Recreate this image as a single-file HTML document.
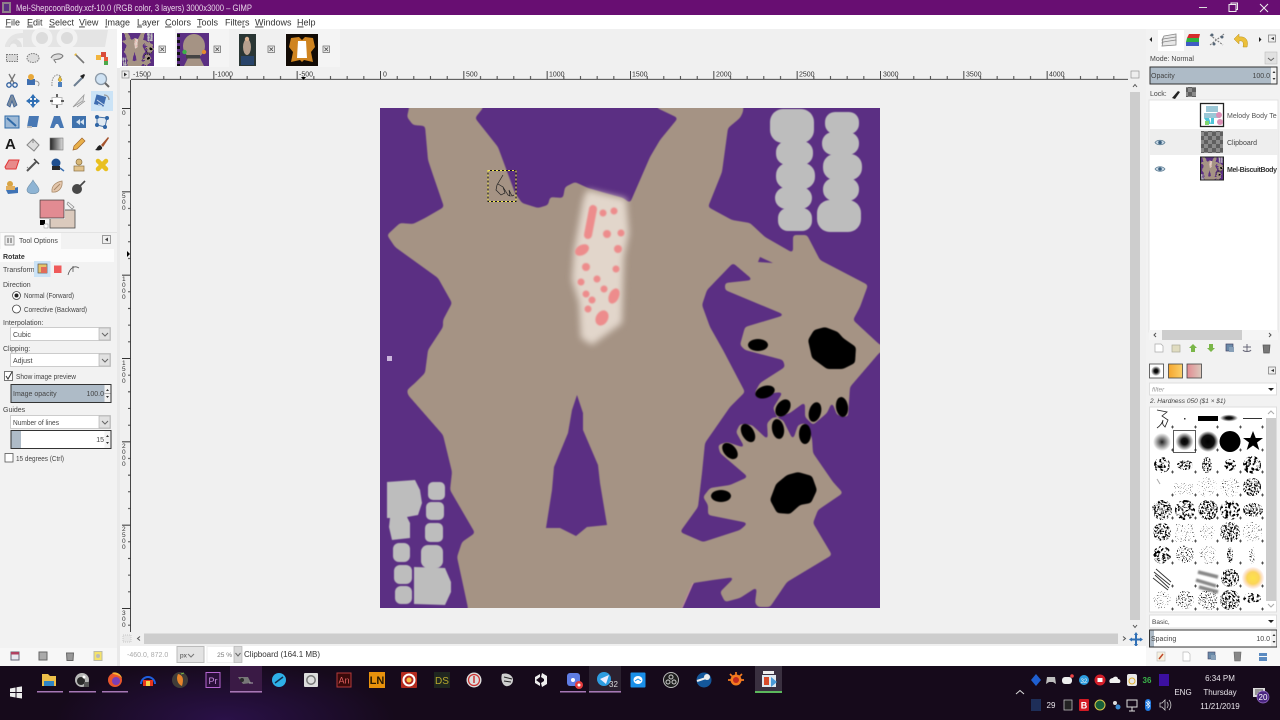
<!DOCTYPE html>
<html><head><meta charset="utf-8"><title>GIMP</title>
<style>
html,body{margin:0;padding:0;background:#f0f0f0;width:1280px;height:720px;overflow:hidden}
svg{display:block}
text{font-family:"Liberation Sans",sans-serif;font-size:7.5px;fill:#444}
.m{font-size:9px;fill:#333}
.o{font-size:7px;fill:#444}
.r{font-size:7px;fill:#333}
.w{fill:#e8e4ea;font-size:8px}
</style></head><body>
<svg width="1280" height="720" viewBox="0 0 1280 720" xmlns="http://www.w3.org/2000/svg">
<defs>
<clipPath id="cv"><rect x="380" y="108" width="500" height="500"/></clipPath>
<filter id="round" x="-5%" y="-5%" width="110%" height="110%" color-interpolation-filters="sRGB"><feGaussianBlur stdDeviation="1.500"/><feComponentTransfer><feFuncA type="linear" slope="9" intercept="-4"/></feComponentTransfer><feGaussianBlur stdDeviation=".45"/></filter>
<filter id="soft" x="-5%" y="-5%" width="110%" height="110%" color-interpolation-filters="sRGB"><feGaussianBlur stdDeviation="0.55"/></filter>
<filter id="blur3" x="-30%" y="-30%" width="160%" height="160%" color-interpolation-filters="sRGB"><feGaussianBlur stdDeviation="3.400"/></filter>
<filter id="blur1" x="-30%" y="-30%" width="160%" height="160%" color-interpolation-filters="sRGB"><feGaussianBlur stdDeviation="0.8"/></filter>
<filter id="n1" x="0" y="0" width="100%" height="100%"><feTurbulence type="fractalNoise" baseFrequency=".55" numOctaves="2" seed="3"/><feColorMatrix values="0 0 0 0 0 0 0 0 0 0 0 0 0 0 0 7 0 0 0 -3.300"/><feComposite in2="SourceGraphic" operator="in"/></filter>
<filter id="n2" x="0" y="0" width="100%" height="100%"><feTurbulence type="fractalNoise" baseFrequency=".8" numOctaves="1" seed="8"/><feColorMatrix values="0 0 0 0 0 0 0 0 0 0 0 0 0 0 0 9 0 0 0 -5"/><feComposite in2="SourceGraphic" operator="in"/></filter>
<filter id="n3" x="0" y="0" width="100%" height="100%"><feTurbulence type="fractalNoise" baseFrequency=".35" numOctaves="3" seed="14"/><feColorMatrix values="0 0 0 0 0 0 0 0 0 0 0 0 0 0 0 8 0 0 0 -3.900"/><feComposite in2="SourceGraphic" operator="in"/></filter>
<filter id="n4" x="0" y="0" width="100%" height="100%"><feTurbulence type="fractalNoise" baseFrequency=".9" numOctaves="1" seed="21"/><feColorMatrix values="0 0 0 0 0 0 0 0 0 0 0 0 0 0 0 12 0 0 0 -7.600"/><feComposite in2="SourceGraphic" operator="in"/></filter>
<radialGradient id="sb1"><stop offset="0" stop-color="#222"/><stop offset="1" stop-color="#222" stop-opacity="0"/></radialGradient>
<radialGradient id="sb2"><stop offset="0" stop-color="#000"/><stop offset=".35" stop-color="#111"/><stop offset="1" stop-color="#111" stop-opacity="0"/></radialGradient>
<radialGradient id="sb3"><stop offset="0" stop-color="#000"/><stop offset=".6" stop-color="#111"/><stop offset="1" stop-color="#111" stop-opacity="0"/></radialGradient>
<radialGradient id="sun"><stop offset="0" stop-color="#fde24a"/><stop offset=".55" stop-color="#fbd55a"/><stop offset="1" stop-color="#f9b8a0" stop-opacity=".1"/></radialGradient>
<radialGradient id="glow" gradientUnits="userSpaceOnUse" cx="225" cy="720" r="170" gradientTransform="translate(0 468) scale(1 .35)"><stop offset="0" stop-color="#2a1148"/><stop offset="1" stop-color="#2a1148" stop-opacity="0"/></radialGradient>
<linearGradient id="grad" x1="0" x2="1"><stop offset="0" stop-color="#222"/><stop offset="1" stop-color="#ddd"/></linearGradient>
<linearGradient id="ograd" x1="0" x2="1"><stop offset="0" stop-color="#f4a62f"/><stop offset="1" stop-color="#fbd06a"/></linearGradient>
<linearGradient id="pgrad" x1="0" x2="1"><stop offset="0" stop-color="#e28b92"/><stop offset="1" stop-color="#dbcabd"/></linearGradient>
<pattern id="chk" width="8" height="8" patternUnits="userSpaceOnUse"><rect width="8" height="8" fill="#8b8b8b"/><rect width="4" height="4" fill="#5f5f5f"/><rect x="4" y="4" width="4" height="4" fill="#5f5f5f"/></pattern>
<pattern id="rx" x="380" y="67" width="83.333" height="12" patternUnits="userSpaceOnUse"><path d="M.5 4V12M17.2 9V12M33.8 9V12M50.5 9V12M67.2 9V12" stroke="#333" stroke-width=".9" fill="none"/></pattern>
<pattern id="ry" x="119" y="108" width="12" height="83.333" patternUnits="userSpaceOnUse"><path d="M3 .5H12M9 17.2H12M9 33.8H12M9 50.5H12M9 67.2H12" stroke="#333" stroke-width=".9" fill="none"/></pattern>

<g id="art">
<rect x="380" y="108" width="500" height="500" fill="#5b2f83"/>
<g clip-path="url(#cv)">
<g filter="url(#round)">
<path fill="#a59384" d="M409 100L483 100 483 108 475 118 498 147 515 193 522 203 538 208 548 205 550 197 563 198 565 187 575 182 588 188 605 193 623 198 630 203 650 157 660 140 678 118 657 108 655 100 744 100 743 112 740 118 728 128 722 172 708 207 732 220 750 223 765 237 793 253 793 235 807 235 820 260 868 285 860 307 853 320 880 345 892 345 892 352 880 352 850 387 848 417 837 415 832 402 827 413 813 425 805 417 805 402 790 413 777 417 773 408 783 392 773 393 758 398 755 392 760 383 785 367 783 360 745 350 740 345 745 327 785 315 725 290 725 283 753 280 733 263 707 290 702 305 710 327 723 350 745 392 730 407 705 443 702 473 698 507 680 532 703 542 740 530 748 523 708 515 708 505 703 497 710 488 730 485 748 477 720 453 718 445 727 442 745 448 736 432 740 424 752 425 768 440 767 423 773 417 783 420 793 440 798 425 805 423 812 438 813 453 833 482 843 493 818 510 813 523 832 555 787 582 770 607 758 607 755 603 757 587 740 598 725 602 720 592 735 577 713 580 700 582 693 583 682 608 680 618 466 618 468 608 462 580 457 557 462 542 475 533 450 490 452 472 443 435 408 395 407 390 415 383 425 373 428 350 443 327 443 320 452 303 438 278 395 247 387 235 400 223 413 224 425 218 444 207 433 175 428 160 425 126 413 125 407 117 409 108z"/>
</g>
<g filter="url(#soft)">
<path fill="#5b2f83" d="M577 395L572 410 568 433 554 467 552 490 546 528 560 528 576 536 587 527 607 525 600 483 598 465 583 430 583 413z"/>
<path fill="#5b2f83" d="M760 257L773 263 758 262z"/>
<path fill="none" stroke="#d9a3a8" stroke-width="1" opacity=".8" d="M682 608L693 583"/>
</g>
</g>
<path fill="#e2d6cb" filter="url(#blur3)" d="M587 190L626 199 629 233 624 257 622 323 592 345 581 338 579 303 572 280 574 250 583 200z"/>
<g fill="#ed8c8c" filter="url(#blur1)">
<path d="M593 209L588 235" stroke="#ed8c8c" stroke-width="8" stroke-linecap="round"/>
<ellipse cx="582" cy="250" rx="7.500" ry="5" transform="rotate(-30 582 250)"/>
<circle cx="586" cy="267" r="4"/><circle cx="603" cy="213" r="3.500"/><circle cx="614" cy="211" r="3.500"/><circle cx="607" cy="234" r="4"/><circle cx="621" cy="233" r="3.500"/><circle cx="618" cy="249" r="4"/><circle cx="616" cy="269" r="3.500"/><circle cx="581" cy="282" r="3.500"/><circle cx="597" cy="279" r="3.500"/><circle cx="604" cy="289" r="3.500"/><circle cx="586" cy="294" r="3.500"/><circle cx="592" cy="300" r="3.500"/><circle cx="588" cy="309" r="3.500"/>
<ellipse cx="614" cy="296" rx="5" ry="8" transform="rotate(25 614 296)"/>
<ellipse cx="602" cy="318" rx="6" ry="8" transform="rotate(30 602 318)"/>
</g>
<g fill="#000" filter="url(#round)">
<path d="M825 327L838 332 843 338 856 347 855 363 843 369 827 369 812 358 808 340 814 330z"/>
<path d="M798 472L812 476 817 490 811 503 800 505 790 514 777 513 770 500 776 484 787 475z"/>
</g>
<g fill="#000" filter="url(#soft)">
<ellipse cx="758" cy="345" rx="10" ry="6"/>
<ellipse cx="765" cy="392" rx="10" ry="6" transform="rotate(-18 765 392)"/>
<ellipse cx="783" cy="408" rx="6.500" ry="9.500" transform="rotate(35 783 408)"/>
<ellipse cx="815" cy="412" rx="6" ry="10" transform="rotate(15 815 412)"/>
<ellipse cx="842" cy="407" rx="6" ry="10" transform="rotate(-8 842 407)"/>
<ellipse cx="748" cy="433" rx="6" ry="10" transform="rotate(-30 748 433)"/>
<ellipse cx="730" cy="451" rx="6" ry="9.500" transform="rotate(-42 730 451)"/>
<ellipse cx="778" cy="429" rx="6" ry="10" transform="rotate(-10 778 429)"/>
<ellipse cx="805" cy="434" rx="6" ry="10"/>
<ellipse cx="721" cy="496" rx="10" ry="6"/>
</g>
<g fill="#bdbdbd" filter="url(#soft)">
<rect x="770" y="109" width="44" height="34" rx="13"/><rect x="776" y="141" width="37" height="24" rx="11"/><rect x="776" y="163" width="39" height="26" rx="12"/><rect x="775" y="187" width="37" height="22" rx="11"/><rect x="778" y="208" width="34" height="23" rx="10"/>
<rect x="825" y="112" width="34" height="22" rx="10"/><rect x="822" y="132" width="37" height="23" rx="11"/><rect x="823" y="154" width="39" height="26" rx="12"/><rect x="823" y="178" width="36" height="23" rx="11"/><rect x="817" y="200" width="44" height="32" rx="13"/>
<path d="M387 482L415 480 420 490 422 503 418 515 407 517 410 523 410 538 392 540 389 527 390 518 387 518z"/>
<rect x="428" y="482" width="17" height="18" rx="5"/><rect x="426" y="502" width="18" height="18" rx="5"/><rect x="425" y="523" width="18" height="19" rx="5"/><rect x="421" y="545" width="22" height="23" rx="7"/>
<path d="M414 567L445 568 451 582 451 592 445 605 414 604z"/>
<rect x="393" y="543" width="17" height="19" rx="6"/><rect x="394" y="565" width="18" height="19" rx="6"/><rect x="395" y="586" width="17" height="18" rx="6"/>
</g>
<rect x="387" y="356" width="5" height="5" fill="#cbb6dc"/>
<path d="M503 175L497 185 496 190 501 195 505 193 503 187 498 184M503 187L508 195 510 196 509 190 512 196 514 195" fill="none" stroke="#222" stroke-width=".7"/>
</g>
</defs>

<!-- title bar -->
<rect width="1280" height="15" fill="#680e72"/>
<rect x="2" y="2" width="9" height="11" fill="#8f7f8a"/><rect x="4" y="4" width="5" height="7" fill="#5b2f83"/>
<text x="16" y="11" style="font-size:9px;fill:#e9d9ea" textLength="236" lengthAdjust="spacingAndGlyphs">Mel-ShepcoonBody.xcf-10.0 (RGB color, 3 layers) 3000x3000 – GIMP</text>
<path d="M1199 7.500H1207" stroke="#ddd" stroke-width="1"/>
<path d="M1229 4.500h7v7h-7zM1231 4.500v-1.500h6.500v6.500h-1.500" fill="none" stroke="#eee" stroke-width="1"/>
<path d="M1260 4L1268 12M1268 4L1260 12" stroke="#eee" stroke-width="1"/>

<!-- menu -->
<rect y="15" width="1280" height="14" fill="#fff"/>
<g class="m">
<text class="m" x="5.500" y="25.500"><tspan text-decoration="underline">F</tspan>ile</text>
<text class="m" x="27" y="25.500"><tspan text-decoration="underline">E</tspan>dit</text>
<text class="m" x="49" y="25.500"><tspan text-decoration="underline">S</tspan>elect</text>
<text class="m" x="79" y="25.500"><tspan text-decoration="underline">V</tspan>iew</text>
<text class="m" x="105" y="25.500"><tspan text-decoration="underline">I</tspan>mage</text>
<text class="m" x="137" y="25.500"><tspan text-decoration="underline">L</tspan>ayer</text>
<text class="m" x="165" y="25.500"><tspan text-decoration="underline">C</tspan>olors</text>
<text class="m" x="197" y="25.500"><tspan text-decoration="underline">T</tspan>ools</text>
<text class="m" x="225" y="25.500">Filte<tspan text-decoration="underline">r</tspan>s</text>
<text class="m" x="255" y="25.500"><tspan text-decoration="underline">W</tspan>indows</text>
<text class="m" x="297" y="25.500"><tspan text-decoration="underline">H</tspan>elp</text>
</g>

<!-- left dock -->
<rect y="29" width="117" height="637" fill="#f2f2f2"/>
<rect x="117" y="29" width="3" height="637" fill="#e9e9e9"/>
<path d="M23 30H108L105 47H23z" fill="#e4e4e4"/>
<path d="M5 47A8.500 8.500 0 0 1 22 47H17A3.500 3.500 0 0 0 10 47z" fill="#e0e0e0"/>
<path d="M5 47C7 38 12 33 23 33V38C15 38 10 41 9 47z" fill="#e4e4e4"/>
<circle cx="42" cy="38" r="10.500" fill="#f2f2f2"/><circle cx="42" cy="38" r="6" fill="#dcdcdc"/>
<circle cx="67" cy="38" r="10.500" fill="#f2f2f2"/><circle cx="67" cy="38" r="6" fill="#dcdcdc"/>
<rect x="91" y="91" width="22" height="20" fill="#cbe3f6"/>

<!-- tools r1 -->
<g transform="translate(12,58)"><rect x="-5.500" y="-3.500" width="11" height="7" fill="#d7d7d7" stroke="#777" stroke-dasharray="1.500 1"/></g>
<g transform="translate(33,58)"><ellipse rx="6" ry="4.500" fill="#ddd" stroke="#777" stroke-dasharray="1.500 1"/></g>
<g transform="translate(57,58)"><path d="M-6 0C-4 -5 4 -5 6 -2 4 2 -1 1 -3 2L-1 5" fill="#ddd" stroke="#777"/></g>
<g transform="translate(79,58)"><path d="M-3 -3L5 5" stroke="#777" stroke-width="1.600"/><path d="M-4 -4l1 1" stroke="#e8b83a" stroke-width="2.500"/></g>
<g transform="translate(102,58)"><rect x="-6" y="-3" width="5" height="5" fill="#f2b53e"/><rect x="-1" y="-6" width="5" height="5" fill="#d94b3a"/><rect x="2" y="-1" width="4" height="4" fill="#e85a3a"/><rect x="2" y="3" width="4" height="4" fill="#4ca84a"/></g>
<!-- r2 -->
<g transform="translate(12,80)"><path d="M-3 -6L2 3M3 -6L-2 3" stroke="#777" stroke-width="1.300"/><circle cx="-3" cy="5" r="2.200" fill="none" stroke="#2f5f9f" stroke-width="1.300"/><circle cx="3" cy="5" r="2.200" fill="none" stroke="#2f5f9f" stroke-width="1.300"/></g>
<g transform="translate(33,80)"><rect x="-6" y="-1" width="8" height="6" fill="#3f6fb0"/><circle cx="-2" cy="-3" r="3" fill="#e8a83a"/><path d="M2 1C6 1 7 4 5 6" fill="none" stroke="#999"/></g>
<g transform="translate(57,80)"><path d="M-5 6C-6 -6 2 -7 4 -3" fill="none" stroke="#888" stroke-dasharray="1.500 1"/><path d="M3 -4L5 0 3 2 1 0z" fill="#edc13c" stroke="#8a7a30" stroke-width=".5"/><rect x="1" y="2" width="4" height="5" fill="#4d7fbd"/></g>
<g transform="translate(79,80)"><path d="M-5 6L3 -2" stroke="#6d7f92" stroke-width="2"/><path d="M1 -4L5 -6 6 -5 4 -1z" fill="#222"/></g>
<g transform="translate(102,80)"><circle cx="-1" cy="-1" r="5.500" fill="#cfe2f3" stroke="#8c9aa8" stroke-width="1.300"/><path d="M3 3L7 7" stroke="#666" stroke-width="2"/></g>
<!-- r3 -->
<g transform="translate(12,101)"><path d="M-1 -6L-5 4-2 6 0 0 2 6 5 4 1 -6z" fill="#7a8ca0" stroke="#3a5f95" stroke-width=".8"/></g>
<g transform="translate(33,101)"><path d="M0-7L3-3H1V-1H3V-3L7 0 3 3V1H1V3H3L0 7-3 3H-1V1H-3V3L-7 0-3-3V-1H-1V-3H-3z" fill="#2f6fb5"/></g>
<g transform="translate(57,101)"><rect x="-5" y="-3.500" width="10" height="7" fill="#fff" stroke="#bbb"/><path d="M0-7V-4M0 7V4M-7 0H-4M7 0H4" stroke="#333" stroke-width="1.500"/></g>
<g transform="translate(79,101)"><path d="M-6 6L5 -6 4 0 -1 3zM-2 6L6 0" fill="#ddd" stroke="#999" stroke-width=".8"/></g>
<g transform="translate(102,101)"><rect x="-7" y="-5" width="10" height="10" fill="#3f6db0" transform="rotate(15)"/><path d="M-5 -1L2 4M-4 3L0 5" stroke="#cde" stroke-width="1"/><path d="M2 -6C5 -6 7 -4 7 -1" fill="none" stroke="#999" stroke-width="1.200"/></g>
<!-- r4 -->
<g transform="translate(12,122)"><rect x="-7" y="-6" width="14" height="12" fill="#9db9d6" stroke="#2f6aa8"/><path d="M-5 -4L4 4" stroke="#2f6aa8" stroke-width="2"/></g>
<g transform="translate(33,122)"><path d="M-4 -6H6L4 5H-6z" fill="#4878b4"/><path d="M-6 5H-1" stroke="#bbb" stroke-width="2"/></g>
<g transform="translate(57,122)"><path d="M-3 -6H3L7 6H3L1 2H-1L-3 6H-7z" fill="#4878b4"/></g>
<g transform="translate(79,122)"><path d="M-7 -6H7V6H-7z" fill="#3f72ad"/><path d="M-3 0L1 -3V3zM1 0L5 -3V3z" fill="#d5e3f0"/></g>
<g transform="translate(102,122)"><path d="M-5 -5L5 -4 3 5 -5 3z" fill="#dfe9f2" stroke="#4a75a8"/><g fill="#2f65a5"><circle cx="-5" cy="-5" r="2"/><circle cx="5" cy="-4" r="2"/><circle cx="3" cy="5" r="2"/><circle cx="-5" cy="3" r="2"/></g></g>
<!-- r5 -->
<text x="5" y="149" style="font-size:15px;font-weight:bold;fill:#1b1b1b">A</text>
<g transform="translate(33,144)"><path d="M-6 1L0 -5 6 1 1 7z" fill="#ddd" stroke="#888"/><path d="M0 -5V-1" stroke="#888"/></g>
<rect x="50" y="138" width="13" height="12" fill="url(#grad)" stroke="#777" stroke-width=".6"/>
<g transform="translate(79,144)"><path d="M-6 6L-5 2 3 -6 6 -3 -2 5z" fill="#e9b04a" stroke="#a0652a" stroke-width=".7"/></g>
<g transform="translate(102,144)"><path d="M6 -7L-1 1 1 3 7 -6z" fill="#a4532c"/><path d="M-2 1C-5 2 -5 5 -7 6 -3 7 1 6 0 3z" fill="#222"/></g>
<!-- r6 -->
<g transform="translate(12,165)"><path d="M-7 2L-3 -5H7L4 4H-6z" fill="#e88a8a" stroke="#e03535" stroke-width="1"/></g>
<g transform="translate(33,165)"><path d="M-6 6L3 -3" stroke="#555" stroke-width="2"/><path d="M1 -6L6 -1" stroke="#444" stroke-width="1.500"/><path d="M-5 2l-1 1" stroke="#888"/></g>
<g transform="translate(57,165)"><circle cx="-1" cy="-2" r="4.500" fill="#1f4f8f"/><rect x="-5" y="1" width="8" height="4" fill="#2a2a2a"/><path d="M3 3L7 6" stroke="#3a6fb0" stroke-width="1.500"/></g>
<g transform="translate(79,165)"><circle cy="-3" r="3" fill="#d8b878" stroke="#8a7040" stroke-width=".7"/><rect x="-5" y="1" width="10" height="5" fill="#e2c38c" stroke="#8a7040" stroke-width=".7"/></g>
<g transform="translate(102,165)"><path d="M-4 -4L4 4M4 -4L-4 4" stroke="#e9c01f" stroke-width="4.500" stroke-linecap="round"/></g>
<!-- r7 -->
<g transform="translate(12,187)"><path d="M-6 3L6 0 6 6 -4 7z" fill="#3f73b5"/><circle cx="-2" cy="-3" r="3" fill="#d8a444"/><rect x="-6" y="-1" width="9" height="4" fill="#e2ae5c"/></g>
<g transform="translate(33,187)"><path d="M0 -7C2 -3 6 0 6 3 6 8 -6 8 -6 3 -6 0 -2 -3 0 -7z" fill="#8eb4d4" stroke="#6f8fa8" stroke-width=".6"/></g>
<g transform="translate(57,187)"><path d="M-5 5C-6 -2 0 -5 5 -6 6 0 2 6 -5 5z" fill="#e4c7ad" stroke="#a98a68" stroke-width=".8"/><path d="M-3 3L3 -3" stroke="#a98a68"/></g>
<g transform="translate(79,187)"><circle cx="-2" cy="2" r="5" fill="#484848"/><path d="M1 -1L6 -6" stroke="#484848" stroke-width="1.700"/></g>

<!-- colours -->
<rect x="50" y="210" width="25" height="18" fill="#dbcabd" stroke="#4a4a4a" stroke-width=".8"/>
<rect x="39" y="199" width="26" height="20" fill="#fff"/>
<rect x="40" y="200" width="24" height="18" fill="#e28b92" stroke="#4a4040" stroke-width=".8"/>
<rect x="40" y="220" width="5" height="5" fill="#000"/><rect x="44" y="224" width="4" height="4" fill="#fff" stroke="#888" stroke-width=".5"/>
<path d="M68 202L74 207 72 209 67 204z" fill="#eee" stroke="#888" stroke-width=".7"/>

<!-- tool options -->
<rect x="0" y="232" width="117" height="1" fill="#e3e3e3"/>
<rect x="1" y="233" width="60" height="16" fill="#fbfbfb"/>
<rect x="5" y="236" width="9" height="9" fill="#eee" stroke="#888" stroke-width=".7"/>
<path d="M8 238v5M11 238v5" stroke="#555"/>
<text class="o" x="19" y="243">Tool Options</text>
<rect x="102.500" y="235.500" width="8" height="8" fill="#eee" stroke="#777" stroke-width=".7"/><path d="M108 237.500L105 239.500 108 241.500z" fill="#444"/>
<rect x="0" y="249" width="114" height="13" fill="#fbfbfb"/>
<text class="o" x="3" y="259" style="font-weight:bold;fill:#333">Rotate</text>
<text class="o" x="3" y="272">Transform:</text>
<rect x="34" y="261" width="16.500" height="16" fill="#cbe3f6"/>
<rect x="38" y="264" width="9" height="9" fill="#e5c46b" stroke="#555" stroke-width=".7"/><rect x="41" y="267" width="6" height="6" fill="#e06c5a"/>
<rect x="54" y="265.500" width="7.500" height="7.500" fill="#ef5a5a"/>
<path d="M68 275C70 268 74 265 79 268M73 266v6" fill="none" stroke="#555" stroke-width=".8"/>
<text class="o" x="3" y="287">Direction</text>
<circle cx="16.500" cy="295.500" r="4" fill="#fff" stroke="#444" stroke-width=".8"/><circle cx="16.500" cy="295.500" r="2" fill="#222"/>
<text class="o" x="24" y="298" textLength="50" lengthAdjust="spacingAndGlyphs">Normal (Forward)</text>
<circle cx="16.500" cy="309" r="4" fill="#fff" stroke="#444" stroke-width=".8"/>
<text class="o" x="24" y="312" textLength="63" lengthAdjust="spacingAndGlyphs">Corrective (Backward)</text>
<text class="o" x="3" y="325">Interpolation:</text>
<rect x="10.500" y="327.500" width="100" height="13" fill="#fff" stroke="#ccc"/><rect x="99" y="328" width="11" height="12" fill="#e1e1e1" stroke="#aaa" stroke-width=".6"/><path d="M102 333l3 3 3-3" fill="none" stroke="#666"/>
<text class="o" x="13" y="337">Cubic</text>
<text class="o" x="3" y="351">Clipping:</text>
<rect x="10.500" y="353.500" width="100" height="13" fill="#fff" stroke="#ccc"/><rect x="99" y="354" width="11" height="12" fill="#e1e1e1" stroke="#aaa" stroke-width=".6"/><path d="M102 359l3 3 3-3" fill="none" stroke="#666"/>
<text class="o" x="13" y="363">Adjust</text>
<rect x="4.500" y="371.500" width="8" height="9" fill="#fff" stroke="#555" stroke-width=".8"/><path d="M6 376l2 3 4-7" fill="none" stroke="#333"/>
<text class="o" x="16" y="379" textLength="60" lengthAdjust="spacingAndGlyphs">Show image preview</text>
<rect x="11" y="384.500" width="100" height="18" fill="#aebbc7" stroke="#333"/><rect x="104.500" y="385" width="6" height="17" fill="#f2f2f2"/><path d="M106 391l1.500-2 1.500 2zM106 396l1.500 2 1.500-2z" fill="#333"/><path d="M104.500 393.500h6" stroke="#777" stroke-width=".5"/>
<text class="o" x="13" y="396">Image opacity</text><text class="o" x="104" y="396" text-anchor="end">100.0</text>
<text class="o" x="3" y="412">Guides</text>
<rect x="10.500" y="415.500" width="100" height="13" fill="#fff" stroke="#ccc"/><rect x="99" y="416" width="11" height="12" fill="#e1e1e1" stroke="#aaa" stroke-width=".6"/><path d="M102 421l3 3 3-3" fill="none" stroke="#666"/>
<text class="o" x="13" y="425" textLength="46" lengthAdjust="spacingAndGlyphs">Number of lines</text>
<rect x="11" y="430.500" width="100" height="18" fill="#fff" stroke="#333"/><rect x="11.500" y="431" width="9.500" height="17" fill="#aebbc7"/><rect x="104.500" y="431" width="6" height="17" fill="#f2f2f2"/><path d="M106 437l1.500-2 1.500 2zM106 442l1.500 2 1.500-2z" fill="#333"/>
<text class="o" x="104" y="442" text-anchor="end">15</text>
<rect x="5" y="453.500" width="8" height="8.500" fill="#fff" stroke="#555" stroke-width=".8"/>
<text class="o" x="16" y="461" textLength="48" lengthAdjust="spacingAndGlyphs">15 degrees  (Ctrl)</text>
<rect x="0" y="648" width="117" height="18" fill="#f7f7f7"/>
<g transform="translate(15,656)"><rect x="-4" y="-4" width="8" height="8" fill="#e8e8ef" stroke="#667"/><rect x="-4" y="-4" width="8" height="2.500" fill="#b04060"/></g>
<g transform="translate(43,656)"><rect x="-4" y="-4" width="8" height="8" fill="#aaa" stroke="#666"/></g>
<g transform="translate(70,656)"><path d="M-3.500 -3H3.500L3 4.500H-3z" fill="#999" stroke="#666"/></g>
<g transform="translate(98,656)"><rect x="-4" y="-4.500" width="8" height="9" fill="#f5e36a" stroke="#bba"/><circle r="2" fill="#bbb"/></g>

<!-- tabs -->
<rect x="120" y="29" width="1026" height="38" fill="#f0f0f0"/>
<rect x="117" y="29" width="58" height="39" fill="#fff"/>
<rect x="175" y="29" width="54" height="38" fill="#f4f4f4"/><rect x="229" y="29" width="56" height="38" fill="#f0f0f0"/><rect x="285" y="29" width="55" height="38" fill="#f4f4f4"/>
<svg x="122" y="33" width="32" height="33" viewBox="380 108 500 500" preserveAspectRatio="none"><use href="#art"/></svg>
<g>
<rect x="177" y="33" width="32" height="33" fill="#5b2f83"/>
<ellipse cx="194" cy="46" rx="11" ry="12" fill="#a59384"/><path d="M188 58L200 58 204 66H184z" fill="#a59384"/>
<path d="M178.500 34v32" stroke="#111" stroke-width="3" stroke-dasharray="3 3"/>
<circle cx="184.500" cy="52" r="2.200" fill="#3bb24a"/><circle cx="204" cy="52" r="2.200" fill="#e58b2f"/><rect x="186" y="55" width="14" height="3.500" fill="#444"/>
</g>
<g>
<rect x="239" y="34" width="17" height="32" fill="#2a3634"/><ellipse cx="247" cy="47" rx="4" ry="8" fill="#b7a08e"/><circle cx="247" cy="39" r="2.200" fill="#d8b090"/><rect x="241" y="56" width="13" height="9" fill="#28446a"/>
</g>
<g>
<rect x="286" y="34" width="32" height="32" fill="#120b05"/><path d="M291 38L299 37 302 40 305 37 313 38 315 47 311 52 313 62 304 60 302 62 300 60 291 62 293 52 289 47z" fill="#cf8420"/><path d="M298 41H306L307 58H297z" fill="#fff"/>
</g>
<g fill="#eaeaea" stroke="#666" stroke-width=".7">
<rect x="159" y="46" width="6.500" height="6.500"/><rect x="214" y="46" width="6.500" height="6.500"/><rect x="268" y="46" width="6.500" height="6.500"/><rect x="323" y="46" width="6.500" height="6.500"/>
</g>
<path d="M160.500 47.500l3.500 3.500m0-3.500l-3.500 3.500M215.500 47.500l3.500 3.500m0-3.500l-3.500 3.500M269.500 47.500l3.500 3.500m0-3.500l-3.500 3.500M324.500 47.500l3.500 3.500m0-3.500l-3.500 3.500" stroke="#444" stroke-width=".8"/>

<!-- image window -->
<rect x="120" y="67" width="1026" height="579" fill="#f0f0f0"/>
<rect x="122" y="71" width="7" height="7" fill="#eee" stroke="#888" stroke-width=".7"/><path d="M124 72.500l3 2-3 2z" fill="#333"/>
<rect x="131" y="67" width="997" height="12" fill="url(#rx)"/>
<path d="M131 79.300H1128" stroke="#333" stroke-width=".9"/>
<path d="M301 77h5l-2.500 3z" fill="#000"/>
<text class="r" x="133" y="76.500">-1500</text><text class="r" x="215" y="76.500">-1000</text><text class="r" x="299" y="76.500">-500</text><text class="r" x="383" y="76.500">0</text><text class="r" x="466" y="76.500">500</text><text class="r" x="549" y="76.500">1000</text><text class="r" x="632" y="76.500">1500</text><text class="r" x="716" y="76.500">2000</text><text class="r" x="799" y="76.500">2500</text><text class="r" x="883" y="76.500">3000</text><text class="r" x="966" y="76.500">3500</text><text class="r" x="1049" y="76.500">4000</text>
<rect x="119" y="81" width="11.500" height="550" fill="url(#ry)"/>
<path d="M130.500 80V632" stroke="#333" stroke-width=".9"/>
<path d="M127 251l3 3-3 3z" fill="#000"/>
<g style="font-size:6.500px">
<text class="r" x="122" y="115" style="font-size:6.500px">0</text>
<text class="r" style="font-size:6.500px"><tspan x="122" y="198">5</tspan><tspan x="122" y="204">0</tspan><tspan x="122" y="210">0</tspan></text>
<text class="r" style="font-size:6.500px"><tspan x="122" y="281">1</tspan><tspan x="122" y="287">0</tspan><tspan x="122" y="293">0</tspan><tspan x="122" y="299">0</tspan></text>
<text class="r" style="font-size:6.500px"><tspan x="122" y="365">1</tspan><tspan x="122" y="371">5</tspan><tspan x="122" y="377">0</tspan><tspan x="122" y="383">0</tspan></text>
<text class="r" style="font-size:6.500px"><tspan x="122" y="448">2</tspan><tspan x="122" y="454">0</tspan><tspan x="122" y="460">0</tspan><tspan x="122" y="466">0</tspan></text>
<text class="r" style="font-size:6.500px"><tspan x="122" y="531">2</tspan><tspan x="122" y="537">5</tspan><tspan x="122" y="543">0</tspan><tspan x="122" y="549">0</tspan></text>
<text class="r" style="font-size:6.500px"><tspan x="122" y="615">3</tspan><tspan x="122" y="621">0</tspan><tspan x="122" y="627">0</tspan></text>
</g>
<rect x="1130" y="92" width="10" height="528" fill="#cdcdcd"/>
<path d="M1133 87l2-2.500 2 2.500M1133 625l2 2.500 2-2.500" fill="none" stroke="#555"/>
<rect x="1131" y="71" width="8" height="7" fill="#eee" stroke="#888" stroke-width=".6"/>
<rect x="144" y="633.500" width="974" height="10.500" fill="#cdcdcd"/>
<path d="M140 636.500l-2.500 2 2.500 2M1123 636.500l2.500 2-2.500 2" fill="none" stroke="#555"/>
<rect x="123" y="635" width="8" height="7" fill="#e8e8e8" stroke="#bbb" stroke-dasharray="1 1" stroke-width=".7"/>
<path d="M1136 634v11M1131 639.500h11" stroke="#2f6fb5" stroke-width="2"/><path d="M1136 632l-2 3h4zM1136 647l-2-3h4zM1129 639.500l3-2v4zM1143 639.500l-3-2v4z" fill="#2f6fb5"/>

<use href="#art"/>
<rect x="488" y="170.500" width="28" height="31" fill="none" stroke="#111" stroke-width="1"/>
<rect x="488" y="170.500" width="28" height="31" fill="none" stroke="#f2e64a" stroke-width="1" stroke-dasharray="2 2"/>

<!-- status -->
<rect x="120" y="646" width="1026" height="20" fill="#fff"/>
<text class="o" x="127" y="657" style="fill:#aaa">-460.0, 872.0</text>
<rect x="177" y="646.500" width="27" height="16" fill="#e3e3e3" stroke="#bbb"/><text class="o" x="180" y="657.500" style="font-size:6.500px">px</text><path d="M188 654l3 3 3-3" fill="none" stroke="#777"/>
<rect x="207" y="646.500" width="27" height="16" fill="#fff" stroke="#eee"/><text class="o" x="232" y="657" text-anchor="end" style="font-size:6.500px;fill:#777">25 %</text>
<rect x="234" y="646.500" width="8" height="16" fill="#d8d8d8" stroke="#aaa" stroke-width=".6"/><path d="M235.500 653l2.500 3 2.500-3" fill="none" stroke="#666"/>
<text class="m" x="244" y="657" style="font-size:8px">Clipboard (164.1 MB)</text>

<!-- right dock -->
<rect x="1146" y="29" width="134" height="637" fill="#f2f2f2"/>
<rect x="1158" y="30" width="26" height="21" fill="#fff"/>
<path d="M1152 37v5l-2.500-2.500zM1259 37v5l2.500-2.500z" fill="#222"/>
<rect x="1268.500" y="35" width="7" height="7" fill="#eee" stroke="#777" stroke-width=".7"/><path d="M1274 37l-3 1.500 3 1.500z" fill="#333"/>
<g transform="translate(1169,40)" fill="#e8e8e8" stroke="#888" stroke-width=".8"><path d="M-5 -4L7 -6V-2L-7 0z"/><path d="M-6 -1L7 -3V1L-7 3z"/><path d="M-6 2L7 0V5L-7 6z"/></g>
<g transform="translate(1193,40)"><path d="M-4 -6L7 -6 6 -2 -6 -2z" fill="#d62b2b"/><path d="M-6 -2L6 -2 6 2 -7 2z" fill="#2fb040"/><path d="M-7 2L6 2 6 6 -7 6z" fill="#3f5bc4"/></g>
<g transform="translate(1217,40)"><path d="M-7 5L7 -6M-7 -5L6 5" stroke="#777" stroke-dasharray="2 1.200" stroke-width="1"/><circle cx="-5" cy="-5" r="1.500" fill="#567"/><circle cx="5" cy="-3" r="1.500" fill="#567"/><circle cx="-3" cy="4" r="1.500" fill="#567"/></g>
<g transform="translate(1241,40)"><path d="M6 7C8 0 4 -4 -2 -3V-6L-7 -1 -2 4V1C2 0 3 3 2 7z" fill="#ecc03a" stroke="#b89020" stroke-width=".5"/></g>

<text class="o" x="1150" y="61">Mode: Normal</text>
<rect x="1265" y="52" width="12" height="12" fill="#e1e1e1" stroke="#bbb" stroke-width=".6"/><path d="M1268 58l3 2.500 3-2.500" fill="none" stroke="#666"/>
<rect x="1150" y="67" width="127" height="17" fill="#aebbc7" stroke="#333"/><rect x="1271" y="67.500" width="5.500" height="16" fill="#f2f2f2"/><path d="M1272.500 73l1.500-2 1.500 2zM1272.500 78l1.500 2 1.500-2z" fill="#333"/>
<text class="o" x="1151" y="78">Opacity</text><text class="o" x="1270" y="78" text-anchor="end">100.0</text>
<text class="o" x="1150" y="96">Lock:</text>
<path d="M1172 98L1178 91 1180 92 1175 99z" fill="#222"/><rect x="1186" y="87" width="10" height="10" fill="url(#chk)"/>
<rect x="1149" y="100" width="129" height="232" fill="#fff" stroke="#ddd" stroke-width=".8"/>
<rect x="1150" y="129" width="128" height="26" fill="#eeeeee"/>
<rect x="1200.500" y="103.500" width="23" height="23" fill="#fff" stroke="#222" stroke-width="1.300"/>
<path d="M1206 106h12v6h-12zM1204 113h16v5h-16z" fill="#9bc7d6"/><path d="M1204 118l4 6h3l-2-6zM1211 118h3v6h-3z" fill="#4fc5d9"/><circle cx="1219" cy="115" r="3" fill="#dc8fb6"/><circle cx="1220" cy="122" r="3" fill="#dc8fb6"/><path d="M1205 121h4v4h-4z" fill="#7fd66f"/>
<text class="o" x="1227" y="118" style="fill:#555">Melody Body Te</text>
<rect x="1201" y="131" width="22" height="22" fill="url(#chk)"/>
<text class="o" x="1227" y="145">Clipboard</text>
<svg x="1200.500" y="157" width="23" height="23" viewBox="380 108 500 500" preserveAspectRatio="none"><use href="#art"/></svg>
<rect x="1200.500" y="157" width="23" height="23" fill="none" stroke="#222" stroke-width="1"/>
<text class="o" x="1227" y="172" style="font-weight:bold;fill:#333" textLength="50">Mel-BiscuitBody</text>
<g fill="#3a6080"><path d="M1155 142.500C1157 139.500 1163 139.500 1165 142.500 1163 145.500 1157 145.500 1155 142.500z" fill="#c7d7e4" stroke="#5a7a90" stroke-width=".7"/><circle cx="1160" cy="142.500" r="1.800"/><path d="M1155 169C1157 166 1163 166 1165 169 1163 172 1157 172 1155 169z" fill="#c7d7e4" stroke="#5a7a90" stroke-width=".7"/><circle cx="1160" cy="169" r="1.800"/></g>
<rect x="1149" y="330" width="129" height="10" fill="#f5f5f5"/><rect x="1162" y="330" width="80" height="10" fill="#cdcdcd"/>
<path d="M1156 333l-2 2 2 2M1269 333l2 2-2 2" fill="none" stroke="#555"/>
<!-- layer buttons -->
<g stroke-width=".7">
<path d="M1155 344h6l2 2v6h-8z" fill="#fff" stroke="#aaa"/>
<rect x="1172" y="345" width="8" height="7" fill="#e0dcc0" stroke="#aa9"/>
<path d="M1193 344l4 4h-2v4h-4v-4h-2z" fill="#7ab648"/>
<path d="M1211 352l4-4h-2v-4h-4v4h-2z" fill="#7ab648"/>
<rect x="1226" y="344" width="7" height="7" fill="#6a8aa8" stroke="#446"/><rect x="1229" y="347" width="5" height="5" fill="#88a0b8"/>
<path d="M1247 344v8M1243 347h8M1243 350c1 2 7 2 8 0" fill="none" stroke="#667" stroke-width="1"/>
<path d="M1263 345h7l-.7 8h-5.600z" fill="#777" stroke="#555"/>
</g>
<!-- brush tabs -->
<rect x="1149.500" y="364" width="14" height="14" fill="#fff" stroke="#444" stroke-width=".8"/><circle cx="1156" cy="371" r="5" fill="url(#sb2)"/>
<rect x="1168.500" y="364" width="14" height="14" fill="url(#ograd)" stroke="#444" stroke-width=".8"/>
<rect x="1187" y="364" width="14.500" height="14" fill="url(#pgrad)" stroke="#444" stroke-width=".8"/>
<rect x="1268.500" y="367" width="7" height="7" fill="#eee" stroke="#777" stroke-width=".7"/><path d="M1274 369l-3 1.500 3 1.500z" fill="#333"/>
<rect x="1149.500" y="383" width="127" height="12" fill="#fff" stroke="#ddd"/>
<text x="1152" y="391.500" style="font-size:6.500px;font-style:italic;fill:#999">filter</text><path d="M1268 388h6l-3 3z" fill="#222"/>
<text x="1150" y="403" style="font-size:6.500px;font-style:italic;fill:#444">2. Hardness 050 ($1 × $1)</text>
<rect x="1149.500" y="407" width="127" height="205" fill="#fff" stroke="#ddd"/>
<rect x="1266" y="418" width="10" height="183" fill="#cdcdcd"/>
<path d="M1268 414l3-3 3 3M1268 604l3 3 3-3" fill="none" stroke="#aaa"/>
<!-- brushes row 1 -->
<path d="M1157 410L1167 412 1162 416 1168 420 1165 427C1163 425 1162 424 1163 420 1162 424 1160 426 1157 428" fill="none" stroke="#222" stroke-width=".8"/>
<rect x="1184" y="418" width="1.500" height="1.500" fill="#333"/>
<rect x="1198" y="416" width="20" height="5" fill="#000"/>
<ellipse cx="1229" cy="418" rx="9" ry="3.500" fill="url(#sb2)"/>
<rect x="1243" y="418" width="19" height="1" fill="#333"/>
<!-- row 2 -->
<circle cx="1162" cy="442" r="9" fill="url(#sb1)"/>
<rect x="1173.500" y="430.500" width="22" height="22" fill="#fff" stroke="#333" stroke-width=".8"/>
<circle cx="1184.500" cy="441.500" r="9" fill="url(#sb2)"/>
<circle cx="1208" cy="441.500" r="10.500" fill="url(#sb3)"/>
<circle cx="1230" cy="441.500" r="10.500" fill="#000"/>
<path d="M1253 431l2.700 7h7.300l-6 4.500 2.300 7.500-6.300-4.500-6.300 4.500 2.300-7.500-6-4.500h7.300z" fill="#000"/>
<!-- noise rows -->
<g fill="#000">
<circle cx="1162" cy="465" r="8" filter="url(#n3)"/><ellipse cx="1185" cy="465" rx="8" ry="5" filter="url(#n1)"/><ellipse cx="1207" cy="465" rx="5" ry="8" filter="url(#n1)"/><circle cx="1230" cy="465" r="6" fill="#555" filter="url(#n3)"/><circle cx="1252" cy="465" r="9" filter="url(#n3)"/>
<path d="M1157 479l3 5" stroke="#aaa"/><rect x="1174" y="483" width="20" height="12" filter="url(#n4)"/><circle cx="1207" cy="487" r="10" filter="url(#n4)"/><circle cx="1230" cy="487" r="10" fill="#444" filter="url(#n4)"/><circle cx="1252" cy="487" r="9" filter="url(#n1)"/>
<circle cx="1162" cy="510" r="10" filter="url(#n1)"/><circle cx="1185" cy="510" r="10" filter="url(#n3)"/><circle cx="1208" cy="510" r="10" filter="url(#n1)"/><circle cx="1230" cy="510" r="10" filter="url(#n3)"/><ellipse cx="1253" cy="510" rx="10" ry="7" filter="url(#n1)"/>
<circle cx="1162" cy="532" r="9" fill="#333" filter="url(#n1)"/><rect x="1175" y="524" width="20" height="18" fill="#555" filter="url(#n4)"/><circle cx="1208" cy="532" r="8" filter="url(#n4)"/><circle cx="1230" cy="532" r="10" fill="#222" filter="url(#n1)"/><circle cx="1252" cy="532" r="10" filter="url(#n4)"/>
<circle cx="1162" cy="555" r="9" filter="url(#n3)"/><circle cx="1185" cy="554" r="9" fill="#333" filter="url(#n2)"/><circle cx="1208" cy="555" r="9" fill="#555" filter="url(#n4)"/><ellipse cx="1230" cy="555" rx="3" ry="8" fill="#444" filter="url(#n1)"/><ellipse cx="1252" cy="555" rx="3" ry="9" filter="url(#n2)"/>
<path d="M1154 572L1170 585M1155 575L1169 588M1153 578L1168 590M1156 569L1171 582" stroke="#333" stroke-width=".9"/>
<path d="M1198 572L1218 577M1196 580L1216 586M1199 587L1218 592" stroke="#888" stroke-width="3.500" filter="url(#blur1)"/>
<circle cx="1230" cy="578" r="9" fill="#444" filter="url(#n1)"/>
<circle cx="1253" cy="578" r="11" fill="url(#sun)"/>
<circle cx="1162" cy="600" r="9" filter="url(#n4)"/><circle cx="1185" cy="600" r="9" filter="url(#n2)"/><circle cx="1208" cy="600" r="10" fill="#222" filter="url(#n2)"/><circle cx="1230" cy="600" r="10" fill="#222" filter="url(#n1)"/><ellipse cx="1252" cy="598" rx="9" ry="5" filter="url(#n3)"/>
</g>
<g stroke="#333" stroke-width=".8">
<path d="M1171 427h3M1172.500 425.500v3M1194 427h3M1195.500 425.500v3M1216 427h3M1217.500 425.500v3M1239 427h3M1240.500 425.500v3M1261 427h3M1262.500 425.500v3"/>
<path d="M1194 450h3M1195.500 448.500v3M1216 450h3M1217.500 448.500v3M1239 450h3M1240.500 448.500v3M1261 450h3M1262.500 448.500v3M1171 450h3M1172.500 448.500v3"/>
<path d="M1171 472h3M1172.500 470.500v3M1194 472h3M1195.500 470.500v3M1216 472h3M1217.500 470.500v3M1239 472h3M1240.500 470.500v3M1261 472h3M1262.500 470.500v3"/>
<path d="M1171 495h3M1172.500 493.500v3M1194 495h3M1195.500 493.500v3M1216 495h3M1217.500 493.500v3M1239 495h3M1240.500 493.500v3M1261 495h3M1262.500 493.500v3"/>
<path d="M1171 518h3M1172.500 516.500v3M1194 518h3M1195.500 516.500v3M1216 518h3M1217.500 516.500v3M1239 518h3M1240.500 516.500v3M1261 518h3M1262.500 516.500v3"/>
<path d="M1171 541h3M1172.500 539.500v3M1194 541h3M1195.500 539.500v3M1216 541h3M1217.500 539.500v3M1239 541h3M1240.500 539.500v3M1261 541h3M1262.500 539.500v3"/>
<path d="M1171 563h3M1172.500 561.500v3M1194 563h3M1195.500 561.500v3M1216 563h3M1217.500 561.500v3M1239 563h3M1240.500 561.500v3M1261 563h3M1262.500 561.500v3"/>
<path d="M1171 586h3M1172.500 584.500v3M1194 586h3M1195.500 584.500v3M1216 586h3M1217.500 584.500v3M1239 586h3M1240.500 584.500v3M1261 586h3M1262.500 584.500v3"/>
<path d="M1171 609h3M1172.500 607.500v3M1194 609h3M1195.500 607.500v3M1216 609h3M1217.500 607.500v3M1239 609h3M1240.500 607.500v3M1261 609h3M1262.500 607.500v3"/>
</g>
<rect x="1149.500" y="615" width="127" height="13" fill="#fff" stroke="#ddd"/><text class="o" x="1152" y="624" style="font-size:6.500px">Basic,</text><path d="M1268 620h6l-3 3z" fill="#222"/>
<rect x="1149.500" y="630" width="127" height="17" fill="#fff" stroke="#333"/><rect x="1150" y="630.500" width="4" height="16" fill="#aebbc7"/><rect x="1271" y="630.500" width="5.500" height="16" fill="#f2f2f2"/><path d="M1272.500 636l1.500-2 1.500 2zM1272.500 641l1.500 2 1.500-2z" fill="#333"/>
<text class="o" x="1151" y="641">Spacing</text><text class="o" x="1270" y="641" text-anchor="end">10.0</text>
<rect x="1146" y="648" width="134" height="18" fill="#f8f8f8"/>
<rect x="1157" y="652" width="8" height="9" fill="#f5f0e0" stroke="#bbb" stroke-width=".6"/><path d="M1159 659l4-5" stroke="#c0492a" stroke-width="1.500"/>
<path d="M1183 652h5l2 2v7h-7z" fill="#fff" stroke="#bbb" stroke-width=".7"/>
<rect x="1208" y="652" width="7" height="7" fill="#6a8aa8" stroke="#446" stroke-width=".6"/><rect x="1211" y="655" width="5" height="5" fill="#88a0b8"/>
<path d="M1234 652h7l-.7 9h-5.600z" fill="#888" stroke="#666" stroke-width=".6"/>
<path d="M1259 653h8v3h-8zM1259 657h8v4h-8z" fill="#5a8ac0"/>

<!-- taskbar -->
<rect y="666" width="1280" height="54" fill="#160a1b"/>
<rect x="40" y="667" width="370" height="53" fill="url(#glow)"/>
<rect x="230" y="666" width="32" height="27" fill="#3a1a45"/>
<rect x="589" y="666" width="32" height="27" fill="#2b2130"/>
<rect x="755" y="666" width="27" height="27" fill="#3a3040"/>
<g fill="#a677b5">
<rect x="37" y="691" width="26" height="1.500"/><rect x="69" y="691" width="27" height="1.500"/><rect x="102" y="691" width="26" height="1.500"/><rect x="230" y="691" width="32" height="1.500"/><rect x="560" y="691" width="26" height="1.500"/><rect x="589" y="691" width="32" height="1.500"/>
</g>
<rect x="755" y="691" width="27" height="2" fill="#5cb85c"/>
<!-- windows logo -->
<path d="M10 688.500L15.500 687.500V692H10zM16.500 687.300L22 686.400V692H16.500zM10 693H15.500V697.500L10 696.500zM16.500 693H22V698.500L16.500 697.700z" fill="#ececec"/>
<!-- app icons -->
<g transform="translate(49,680)"><path d="M-7 -6H-1L1 -4H7V6H-7z" fill="#edc04a"/><path d="M-5 1H5V6H-5z" fill="#2f85c5"/></g>
<g transform="translate(82,680)"><circle r="7" fill="#b8b8b8"/><circle cx="-1" cy="1" r="4" fill="#2a2a2a"/><circle cx="2" cy="-3" r="1.500" fill="#fff"/><rect x="2" y="2" width="5" height="5" fill="#555"/></g>
<g transform="translate(115,680)"><circle r="7" fill="#e8562c"/><circle cx="1" cy="1" r="4" fill="#7b3fb5"/><path d="M-3 -7C1 -9 6 -6 7 -2 3 -6 -1 -5 -3 -7z" fill="#fbb034"/></g>
<g transform="translate(148,680)"><path d="M-7 4A7 7 0 0 1 7 4" fill="none" stroke="#1f5fe0" stroke-width="2"/><rect x="-5" y="0" width="10" height="6" fill="#e8341c"/><rect x="-2" y="1" width="4" height="5" fill="#f7d34a"/></g>
<g transform="translate(180,680)"><circle r="8" fill="#403c38"/><path d="M-2 -6C3 -5 4 -1 2 6 -3 4 -4 -2 -2 -6z" fill="#e8842c"/><path d="M1 -6l3 -1" stroke="#7ab648"/></g>
<g transform="translate(213,680)"><rect x="-7" y="-7.500" width="14" height="15" fill="#2a0f3a" stroke="#b565d0"/></g>
<text x="213" y="684" text-anchor="middle" style="font-size:9px;fill:#c98ee0">Pr</text>
<g transform="translate(245,680)"><path d="M-7 -3L3 -3 6 3 -2 4z" fill="#777"/><circle cx="-3" cy="0" r="2" fill="#2a2a2a"/><path d="M4 3h4" stroke="#aaa"/></g>
<g transform="translate(279,680)"><circle r="7" fill="#2eb0e8"/><path d="M-4 3L4 -3" stroke="#103050" stroke-width="1.500"/></g>
<g transform="translate(311,680)"><rect x="-7" y="-7" width="14" height="14" rx="1" fill="#ddd"/><circle r="4.200" fill="none" stroke="#777" stroke-width="1.500"/></g>
<rect x="337" y="673" width="14" height="14" fill="#3a0a0a" stroke="#b53a3a"/><text x="344" y="683.500" text-anchor="middle" style="font-size:9px;fill:#e06060">An</text>
<rect x="369" y="672" width="16" height="16" fill="#e8920c"/><text x="377" y="684" text-anchor="middle" style="font-size:11px;font-weight:bold;fill:#2a1a00">LN</text>
<g transform="translate(409,680)"><rect x="-8" y="-8" width="16" height="16" rx="1" fill="#b32a1e"/><circle r="5.500" fill="none" stroke="#fff" stroke-width="2"/><circle r="2.500" fill="#f5c34a"/></g>
<rect x="434" y="672" width="16" height="16" fill="#1f2620"/><text x="442" y="684" text-anchor="middle" style="font-size:10px;fill:#b9a82c">DS</text>
<g transform="translate(474,680)"><circle r="7.500" fill="#ddd"/><circle r="5.500" fill="none" stroke="#c33" stroke-width="1.200"/><path d="M0 -4V3" stroke="#c33" stroke-width="1.500"/></g>
<g transform="translate(507,680)"><path d="M-5 -6C1 -8 6 -4 6 0 6 5 0 8 -3 5 -6 2 -6 -3 -5 -6z" fill="#cfcfcf"/><path d="M-3 -3L5 -1M-3 1L4 2" stroke="#222"/></g>
<g transform="translate(541,680)"><path d="M1 -7L6 -4 6 4 1 7 0 3 3 1V-1L0 -3zM-1 -6V-3L-5 0 -1 3V6L-6 3V-3z" fill="#eee"/></g>
<g transform="translate(574,680)"><rect x="-7" y="-7" width="13" height="13" rx="3" fill="#5f7de5"/><circle cx="-1" cy="0" r="2" fill="#fff"/><circle cx="5" cy="5" r="4" fill="#e63d3d"/><circle cx="5" cy="5" r="1.500" fill="#fff"/></g>
<g transform="translate(606,680)"><circle cx="-2" cy="-1" r="7" fill="#2d9de0"/><path d="M-6 -1L3 -5 0 4z" fill="#eef"/></g>
<text x="609" y="687" style="font-size:8px;fill:#ddd">32</text>
<g transform="translate(638,680)"><rect x="-7.500" y="-7.500" width="15" height="15" rx="1" fill="#1a8fe8"/><ellipse rx="4.500" ry="4" fill="#fff"/><path d="M-3 1L0 -1 3 1" stroke="#1a8fe8" fill="none"/></g>
<g transform="translate(671,680)"><circle r="7.500" fill="#1e1e1e" stroke="#bbb"/><circle cx="0" cy="-3" r="2" fill="none" stroke="#ccc"/><circle cx="-3" cy="2" r="2" fill="none" stroke="#ccc"/><circle cx="3" cy="2" r="2" fill="none" stroke="#ccc"/></g>
<g transform="translate(704,680)"><circle r="7.500" fill="#14579a"/><path d="M-7 1L2 -2" stroke="#eee" stroke-width="2"/><circle cx="3" cy="-3" r="3" fill="#eee"/></g>
<g transform="translate(736,680)"><circle r="5.500" fill="#f47a1f"/><circle r="3" fill="#c0291f"/><path d="M0 -8V-4M-6 -6L-3 -3M6 -6L3 -3M-8 0H-5M8 0H5" stroke="#f47a1f" stroke-width="1.700"/></g>
<g transform="translate(769,680)"><rect x="-7" y="-5" width="14" height="12" fill="#dfe8ef"/><rect x="-6" y="-9" width="11" height="3" fill="#eee"/><rect x="-5" y="-3" width="5" height="8" fill="#d74a2a"/><path d="M2 -3L8 2 2 7z" fill="#4a9ad6"/></g>
<!-- tray row 1 -->
<g transform="translate(1036,680)"><path d="M0 -6L5 0 0 6 -5 0z" fill="#1f5fd0"/></g>
<g transform="translate(1051,680)"><path d="M-5 4L-4 -3H4L5 4 2 2H-2z" fill="#bfbfbf"/></g>
<g transform="translate(1067,680)"><rect x="-5" y="-3" width="10" height="7" rx="3" fill="#eee"/><circle cx="5" cy="-4" r="1.800" fill="#e44"/></g>
<g transform="translate(1084,680)"><circle r="5" fill="#2d9de0"/></g><text x="1084" y="683" text-anchor="middle" style="font-size:6px;fill:#eee">32</text>
<g transform="translate(1100,680)"><circle r="5.500" fill="#d31f2a"/><rect x="-2.500" y="-2" width="5" height="4" fill="#fff"/></g>
<g transform="translate(1115,680)"><path d="M-5 3C-7 0 -4 -2 -2 -2 -1 -4 3 -4 3 -1 6 -1 6 3 4 3z" fill="#f0f0f0"/></g>
<g transform="translate(1132,680)"><rect x="-5" y="-6" width="10" height="12" rx="2" fill="#e8e8e8"/><circle cy="1" r="3" fill="none" stroke="#e0b030"/></g>
<text x="1147" y="683" text-anchor="middle" style="font-size:8px;fill:#3ab54a;font-weight:bold">36</text>
<rect x="1159" y="674" width="10" height="12" fill="#3c10a0"/>
<path d="M1016 694l4-3.500 4 3.500" fill="none" stroke="#ddd"/>
<!-- tray row 2 -->
<rect x="1031" y="699" width="10" height="12" fill="#1e2e58"/>
<text class="w" x="1051" y="708" text-anchor="middle">29</text>
<rect x="1064" y="700" width="8" height="10" fill="#222" stroke="#bbb" stroke-width=".8"/>
<rect x="1079" y="699" width="10" height="12" rx="1" fill="#d21a24"/><text x="1084" y="708.500" text-anchor="middle" style="font-size:9px;font-weight:bold;fill:#fff">B</text>
<circle cx="1100" cy="705" r="5" fill="#18603a" stroke="#d8c84a"/>
<circle cx="1115" cy="703" r="2" fill="#ddd"/><circle cx="1118" cy="707" r="2.500" fill="#3a8ad0"/>
<path d="M1127 700h10v7h-10zM1132 707v4M1129 711h6" fill="none" stroke="#ddd"/>
<rect x="1145" y="699" width="6" height="12" rx="3" fill="#1e78e0"/><path d="M1146 702l4 4-2 2v-7l2 2-4 3" fill="none" stroke="#fff" stroke-width=".6"/>
<path d="M1160 703h2l3-3v10l-3-3h-2zM1167 702c1.500 2 1.500 4 0 6M1169 700c2.500 3 2.500 7 0 10" fill="none" stroke="#ccc" stroke-width=".8"/>
<text class="w" x="1183" y="695" text-anchor="middle">ENG</text>
<text class="w" x="1220" y="681" text-anchor="middle">6:34 PM</text>
<text class="w" x="1220" y="695" text-anchor="middle">Thursday</text>
<text class="w" x="1220" y="709" text-anchor="middle">11/21/2019</text>
<path d="M1253 688h12v9h-12z" fill="#ddd"/><path d="M1255 690h8M1255 692h8M1255 694h6" stroke="#222" stroke-width=".7"/>
<circle cx="1263" cy="697" r="6" fill="#4a2680" stroke="#9a70c8" stroke-width=".7"/><text x="1263" y="700" text-anchor="middle" style="font-size:8px;fill:#fff">20</text>
</svg>
</body></html>
